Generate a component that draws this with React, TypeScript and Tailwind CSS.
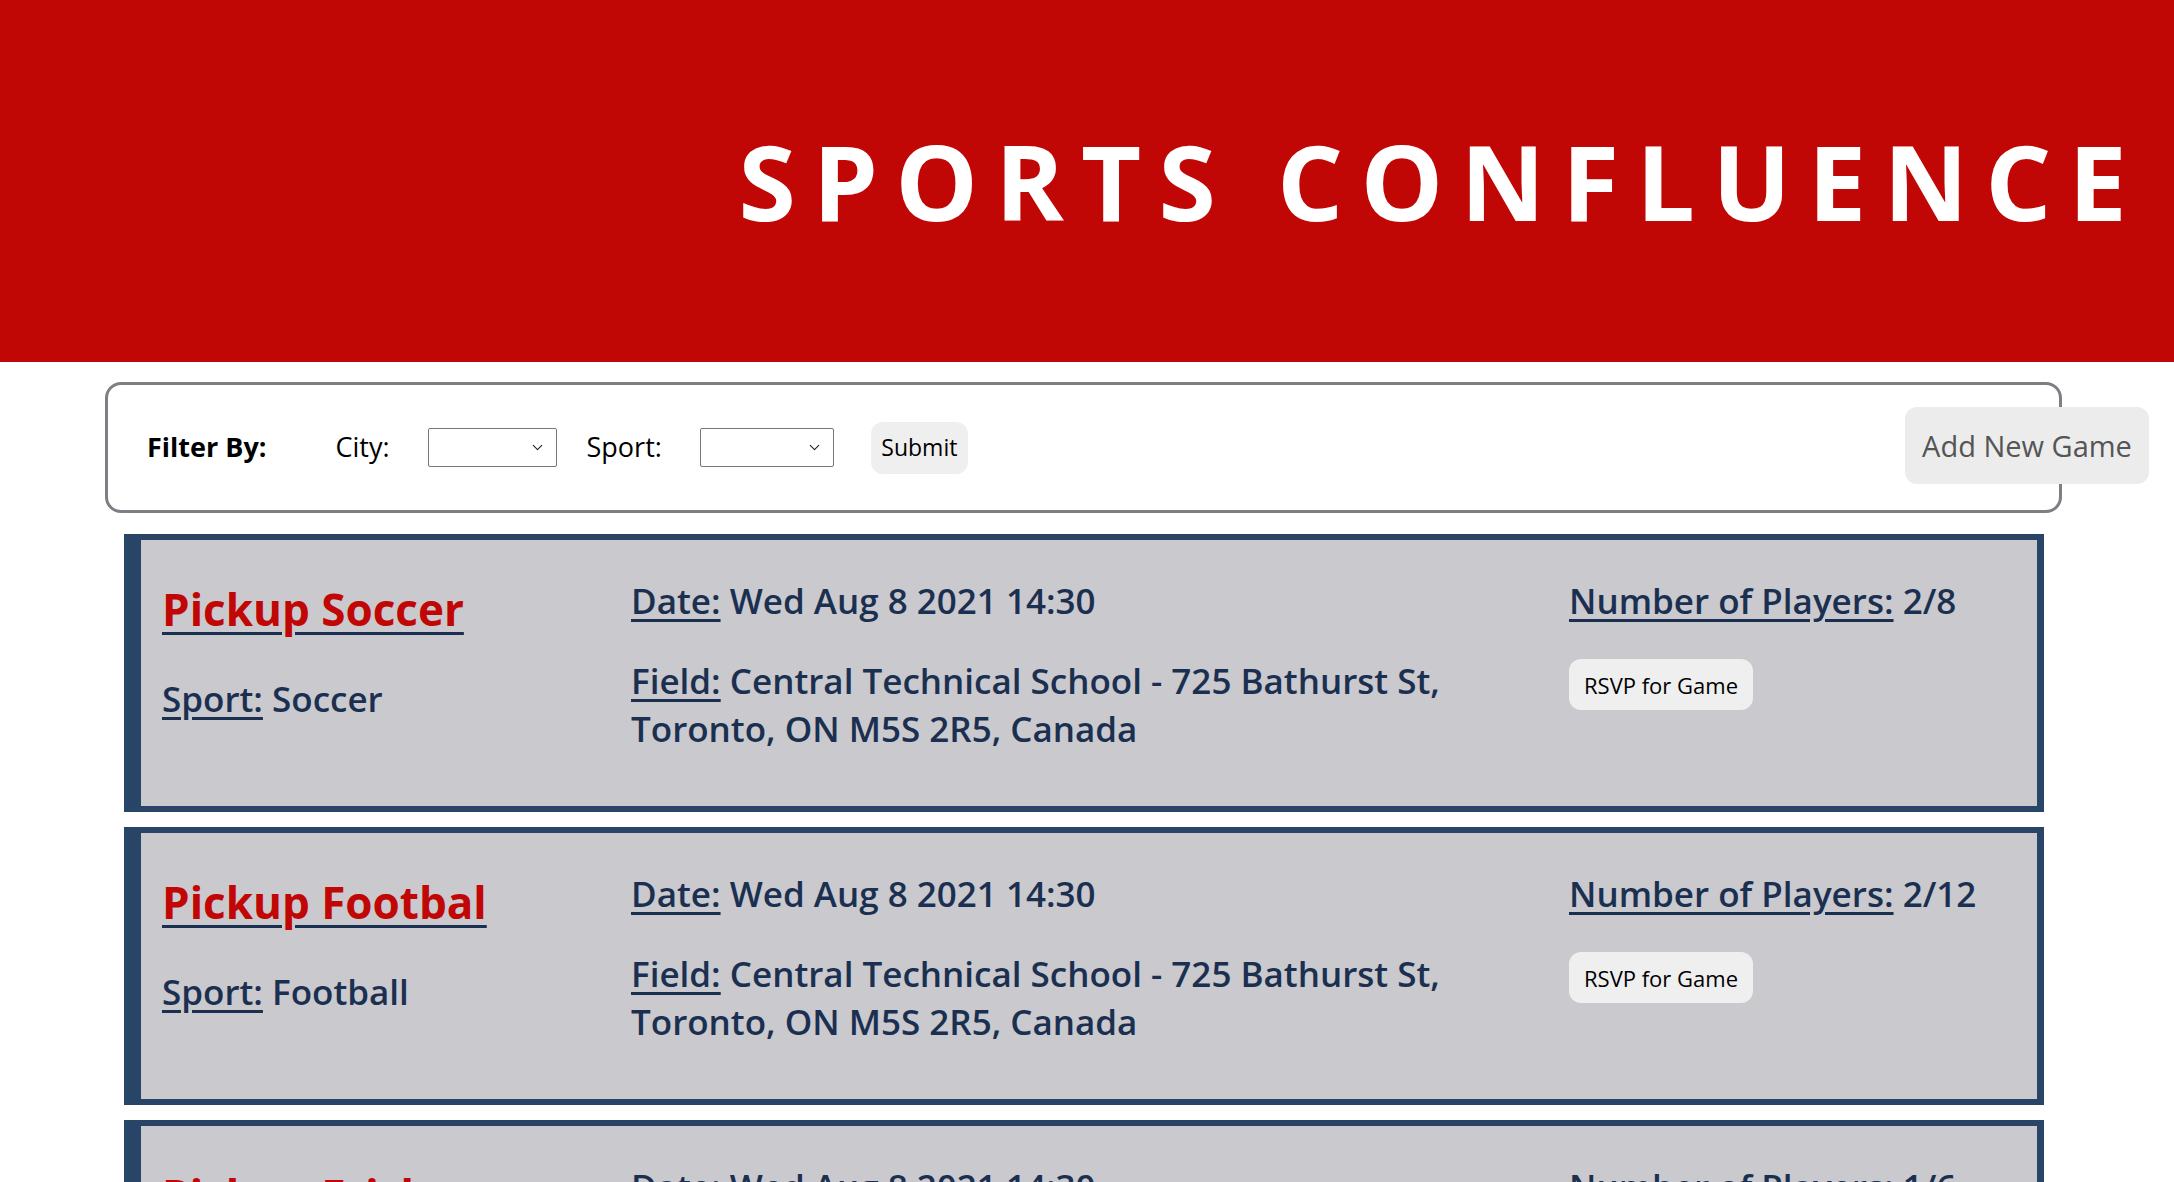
import { ChevronDown } from "lucide-react";

type Game = {
  title: string;
  sport: string;
  date: string;
  players: string;
};

const games: Game[] = [
  { title: "Pickup Soccer", sport: "Soccer", date: "Wed Aug 8 2021 14:30", players: "2/8" },
  { title: "Pickup Footbal", sport: "Football", date: "Wed Aug 8 2021 14:30", players: "2/12" },
  { title: "Pickup Frisbee", sport: "Frisbee", date: "Wed Aug 8 2021 14:30", players: "1/6" },
];

function FakeSelect({ width }: { width: string }) {
  return (
    <div
      className={`${width} h-[39px] bg-white border border-[#767676] rounded-[2px] flex items-center justify-end pr-[10px]`}
    >
      <ChevronDown className="w-[17px] h-[17px] text-[#222]" strokeWidth={1.6} />
    </div>
  );
}

function GameCard({ game }: { game: Game }) {
  return (
    <div className="bg-[#c9c9ce] border-[#284466] border-l-[17px] border-t-[6px] border-b-[6px] border-r-[7px] pl-[21px] pt-[37px] pb-[53px] grid grid-cols-[469px_938px_1fr] text-[#1b3050] font-semibold text-[35px] leading-[48px]">
      {/* title + sport */}
      <div>
        <h2 className="text-[44px] leading-[64px] font-bold underline decoration-[#1b3050] decoration-[3px] underline-offset-[6px]">
          <span className="text-[#c10606]">{game.title}</span>
        </h2>
        <p className="mt-[34px]">
          <span className="underline underline-offset-[5px]">Sport:</span> {game.sport}
        </p>
      </div>

      {/* date + field */}
      <div>
        <p>
          <span className="underline underline-offset-[5px]">Date:</span> {game.date}
        </p>
        <p className="mt-[32px]">
          <span className="underline underline-offset-[5px]">Field:</span> Central Technical School - 725 Bathurst St,
          <br />
          Toronto, ON M5S 2R5, Canada
        </p>
      </div>

      {/* players + rsvp */}
      <div>
        <p>
          <span className="underline underline-offset-[5px]">Number of Players:</span> {game.players}
        </p>
        <button className="mt-[34px] w-[184px] h-[51px] bg-[#efefef] rounded-[12px] text-[22px] font-normal text-black leading-none">
          RSVP for Game
        </button>
      </div>
    </div>
  );
}

export default function App() {
  return (
    <main className="min-h-screen bg-white font-['Open_Sans',sans-serif] overflow-hidden">
      {/* header */}
      <header className="h-[362px] bg-[#c10606] flex items-center justify-end pr-[30px]">
        <h1 className="text-white font-bold text-[104px] leading-none tracking-[0.165em]">
          SPORTS CONFLUENCE
        </h1>
      </header>

      {/* filter bar */}
      <section className="pl-[105px] mt-[20px] flex items-center">
        <div className="w-[1957px] h-[131px] shrink-0 border-[3px] border-[#7e7e85] rounded-[16px] flex items-center pl-[39px] text-[27px] text-black">
          <span className="font-bold">Filter By:</span>
          <span className="ml-[69px]">City:</span>
          <div className="ml-[38px]">
            <FakeSelect width="w-[129px]" />
          </div>
          <span className="ml-[30px]">Sport:</span>
          <div className="ml-[38px]">
            <FakeSelect width="w-[134px]" />
          </div>
          <button className="ml-[37px] w-[97px] h-[52px] bg-[#efefef] rounded-[12px] text-[23px] leading-none">
            Submit
          </button>
        </div>
        <button className="-ml-[157px] w-[244px] h-[77px] shrink-0 bg-[#ececec] rounded-[12px] text-[29px] text-[#555] leading-none -mt-[4px]">
          Add New Game
        </button>
      </section>

      {/* game list */}
      <section className="pl-[124px] mt-[21px] w-[2044px] flex flex-col gap-[15px]">
        {games.map((g) => (
          <GameCard key={g.title} game={g} />
        ))}
      </section>
    </main>
  );
}
